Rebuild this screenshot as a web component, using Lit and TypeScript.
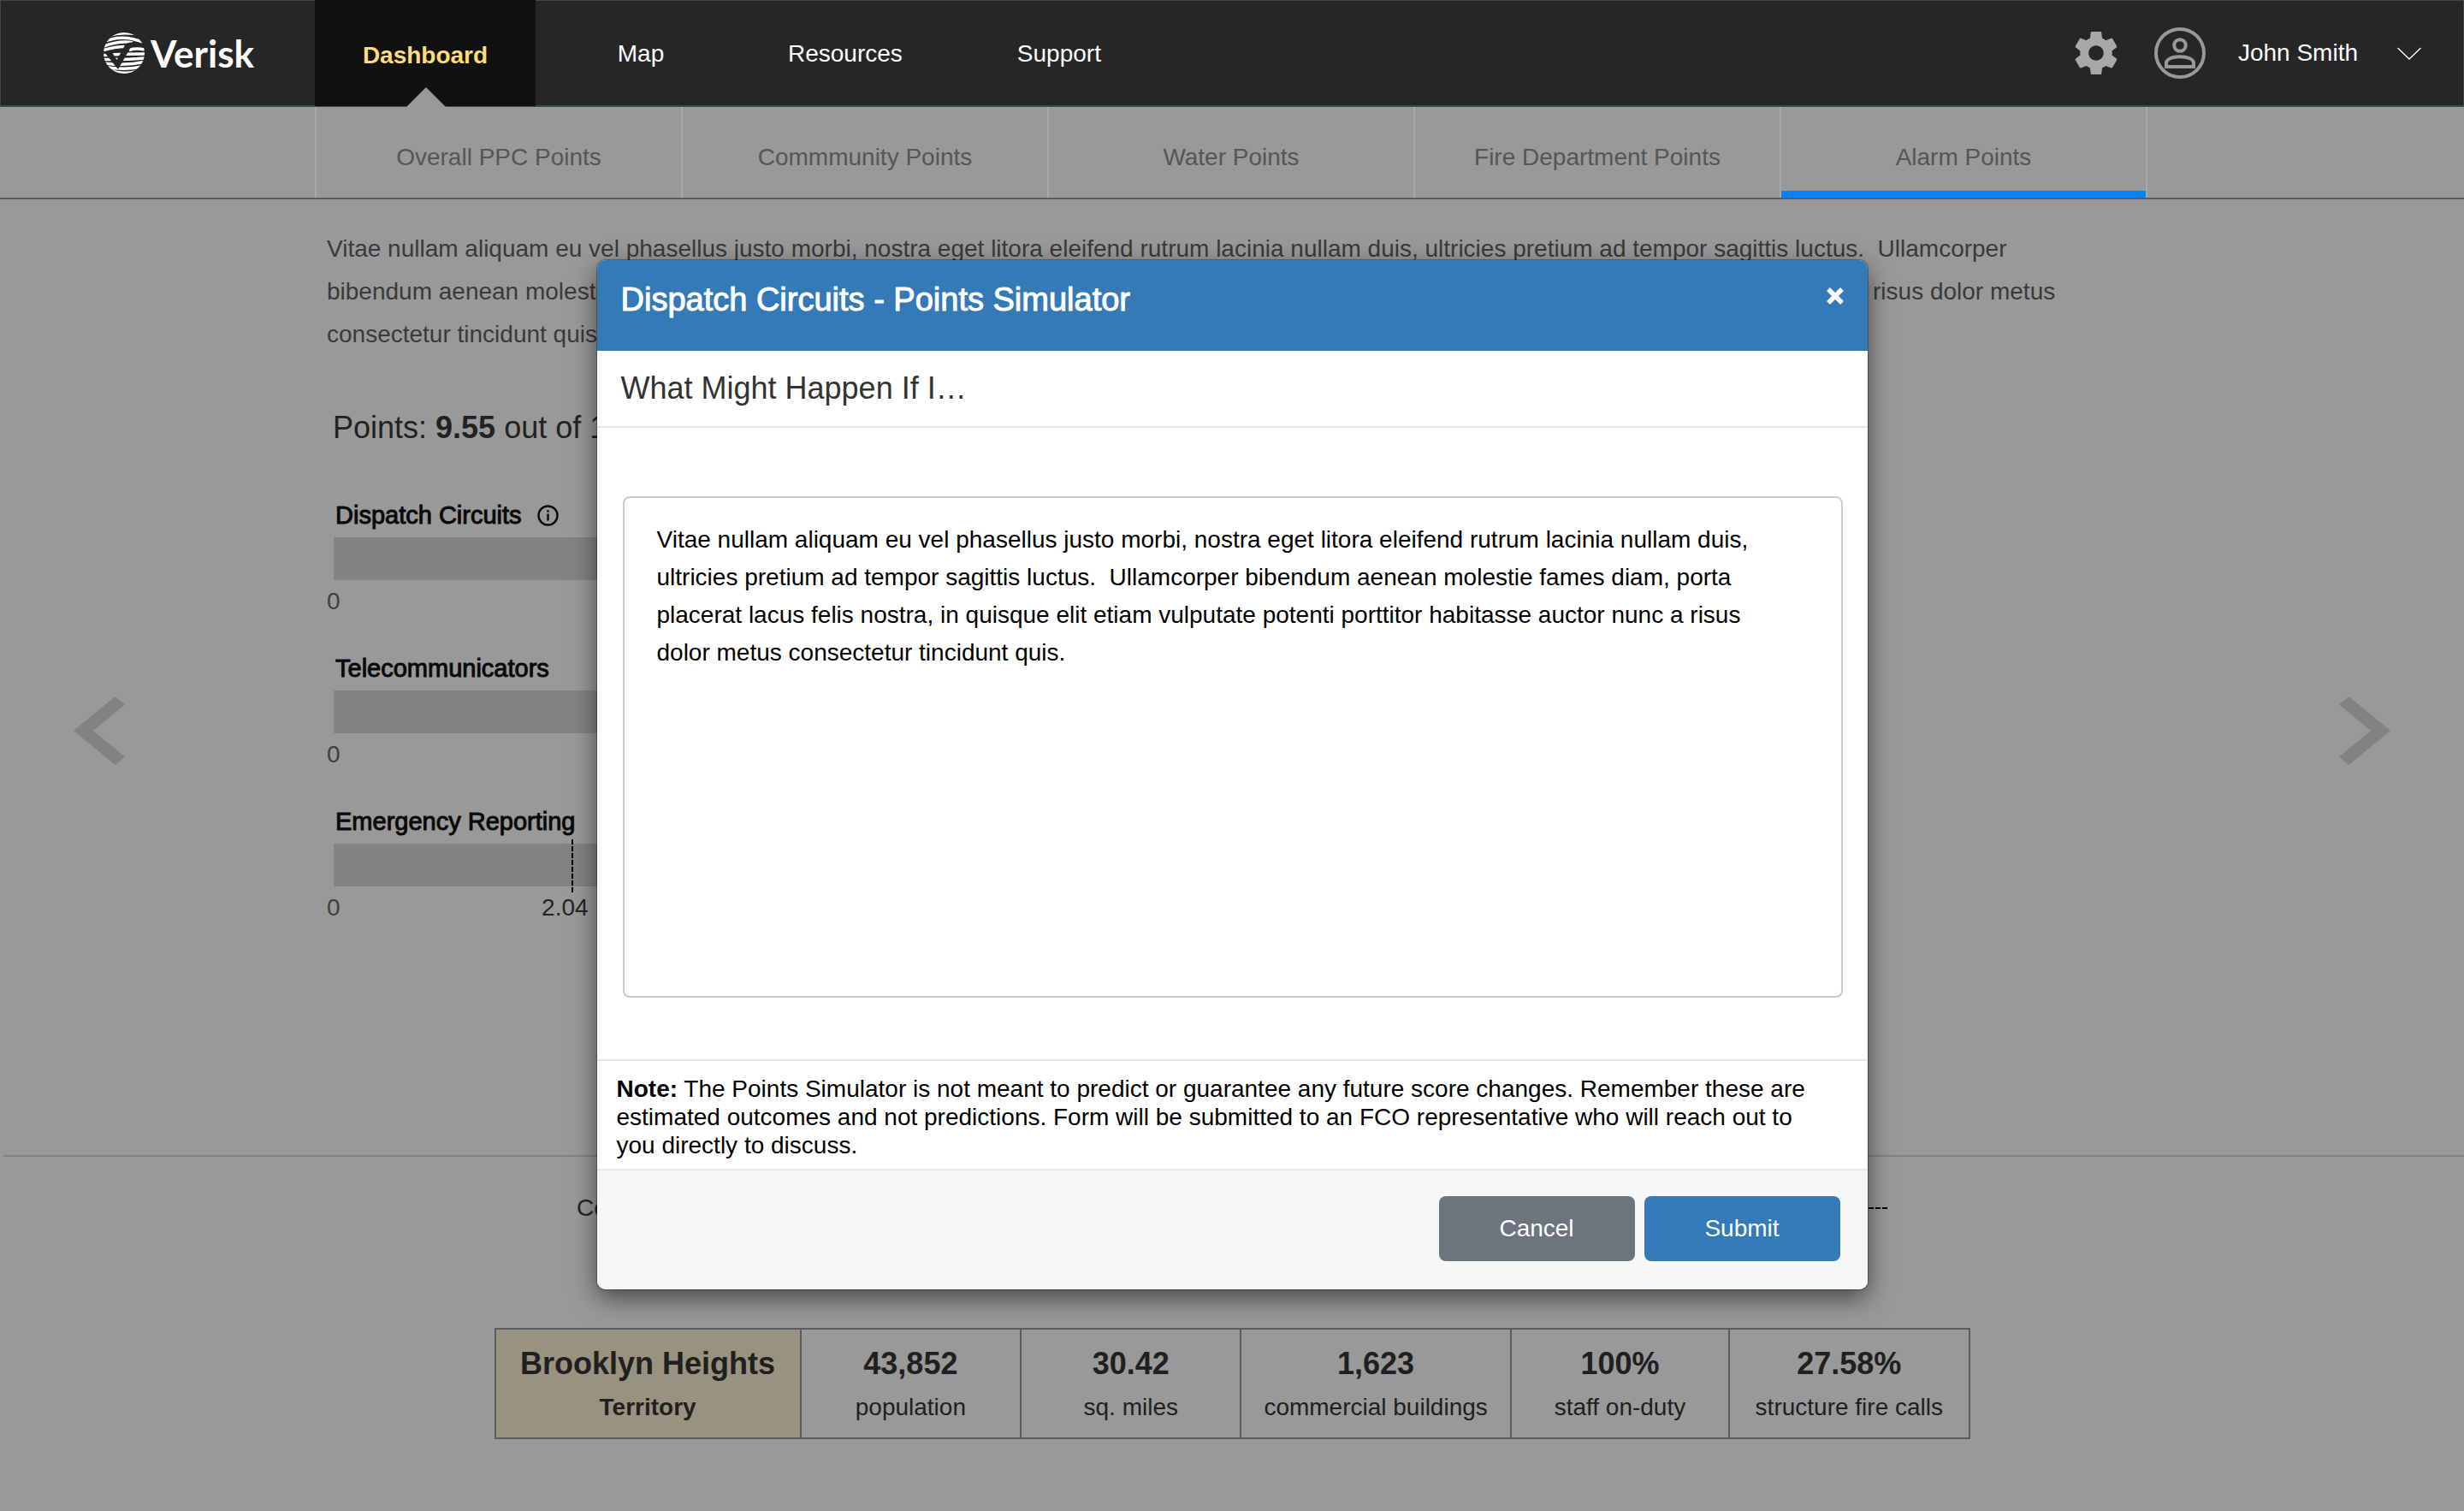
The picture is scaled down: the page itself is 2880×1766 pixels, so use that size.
import { LitElement, html, css, nothing } from "lit";
import { customElement } from "lit/decorators.js";
import { classMap } from "lit/directives/class-map.js";

interface Scale {
  name: string;
  info?: boolean;
  value?: number;
  max: number;
}

const NAV = ["Map", "Resources", "Support"];

const TABS = [
  "Overall PPC Points",
  "Commmunity Points",
  "Water Points",
  "Fire Department Points",
  "Alarm Points",
];

const SCALES: Scale[] = [
  { name: "Dispatch Circuits", info: true, max: 3 },
  { name: "Telecommunicators", max: 3 },
  { name: "Emergency Reporting", value: 2.04, max: 3 },
];

const STATS = [
  ["43,852", "population"],
  ["30.42", "sq. miles"],
  ["1,623", "commercial buildings"],
  ["100%", "staff on-duty"],
  ["27.58%", "structure fire calls"],
];

const DRAFT = [
  "Vitae nullam aliquam eu vel phasellus justo morbi, nostra eget litora eleifend rutrum lacinia nullam duis,",
  "ultricies pretium ad tempor sagittis luctus.  Ullamcorper bibendum aenean molestie fames diam, porta",
  "placerat lacus felis nostra, in quisque elit etiam vulputate potenti porttitor habitasse auctor nunc a risus",
  "dolor metus consectetur tincidunt quis.",
].join("\n");

@customElement("site-header")
class SiteHeader extends LitElement {
  static styles = css`
    :host { display: block; }
    .bar {
      display: flex;
      align-items: stretch;
      height: 125px;
      box-sizing: border-box;
      border: 1px solid #3c494d;
      border-bottom-width: 2px;
      background: #262626;
      color: #fff;
      font-size: 28px;
      line-height: 36px;
    }
    .brand {
      display: flex;
      align-items: center;
      gap: 7px;
      width: 367px;
      box-sizing: border-box;
      padding-left: 120px;
      color: #fff;
      text-decoration: none;
      font-family: Lato, sans-serif;
      font-size: 44px;
      font-weight: 700;
      line-height: 60px;
    }
    .globe { display: block; flex: none; }
    .nav { display: flex; align-items: stretch; margin: -1px 0 -1px; }
    .link {
      display: flex;
      align-items: center;
      padding: 2px 67px 0;
      color: #fff;
      text-decoration: none;
    }
    .link.short { min-width: 76px; justify-content: center; }
    .current {
      position: relative;
      display: flex;
      align-items: center;
      justify-content: center;
      width: 258px;
      margin-right: 18px;
      padding-top: 5px;
      box-sizing: border-box;
      background: #111;
      color: #ffdd75;
      font-weight: 700;
      text-decoration: none;
    }
    .current::after {
      content: "";
      position: absolute;
      left: calc(50% - 22px);
      bottom: -1px;
      border: solid transparent;
      border-width: 0 23px 23px;
      border-bottom-color: #999;
    }
    .tools { display: flex; align-items: center; margin-left: auto; padding-right: 49px; }
    .icon-button, .account {
      display: flex;
      align-items: center;
      padding: 0;
      border: 0;
      background: none;
      color: inherit;
      font: inherit;
    }
    .icon-button { margin-right: 38px; }
    .account { gap: 38px; }
    .account .chev { margin-left: 8px; }
    svg { display: block; flex: none; }
  `;

  render() {
    return html`
      <header class="bar">
        <a class="brand" href="#">
          <svg class="globe" width="48" height="48" viewBox="0 0 48 48" aria-hidden="true">
            <defs><clipPath id="disc"><circle cx="24" cy="24" r="24" /></clipPath></defs>
            <g clip-path="url(#disc)">
              <g fill="none" stroke="#fff" stroke-width="3.5">
                <path d="M4 4Q24-2 44 3" /><path d="M0 11Q22 1 48 12" />
                <path d="M0 16Q20 9 34 12" /><path d="M0 20.500Q20 15 30 17" />
                <path d="M30 20.500Q38 18 48 20" />
                <path d="M0 26.500Q26 25 48 25" /><path d="M0 31.500Q26 32 48 30" />
                <path d="M0 36Q26 39 48 34.500" /><path d="M0 40Q26 45 48 39" />
                <path d="M4 43.500Q26 51 46 43.500" />
              </g>
              <path d="M1 23L9 21.500L15.500 32L26 13Q35 9 49 14L46 17Q37 15 32 17L17 43Z" fill="#262626" />
            </g>
          </svg>
          Verisk
        </a>
        <nav class="nav" aria-label="Main">
          <a class="current" href="#dashboard" aria-current="page">Dashboard</a>
          ${NAV.map(
            (n, i) => html`<a class=${classMap({ link: true, short: i === 0 })} href="#">${n}</a>`
          )}
        </nav>
        <div class="tools">
          <button class="icon-button" aria-label="Settings">
            <svg width="60" height="60" viewBox="0 0 24 24" fill="#a8a8a8">
              <path d="M19.43 12.98c.04-.32.07-.64.07-.98s-.03-.66-.07-.98l2.11-1.65c.19-.15.24-.42.12-.64l-2-3.46c-.12-.22-.39-.3-.61-.22l-2.49 1c-.52-.4-1.08-.73-1.69-.98l-.38-2.65C14.46 2.18 14.25 2 14 2h-4c-.25 0-.46.18-.49.42l-.38 2.65c-.61.25-1.17.59-1.69.98l-2.49-1c-.23-.09-.49 0-.61.22l-2 3.46c-.13.22-.07.49.12.64l2.11 1.65c-.04.32-.07.65-.07.98s.03.66.07.98l-2.11 1.65c-.19.15-.24.42-.12.64l2 3.46c.12.22.39.3.61.22l2.49-1c.52.4 1.08.73 1.69.98l.38 2.65c.03.24.24.42.49.42h4c.25 0 .46-.18.49-.42l.38-2.65c.61-.25 1.17-.59 1.69-.98l2.49 1c.23.09.49 0 .61-.22l2-3.46c.12-.22.07-.49-.12-.64l-2.11-1.65zM12 15.5c-1.93 0-3.5-1.57-3.5-3.5s1.57-3.5 3.5-3.5 3.5 1.57 3.5 3.5-1.57 3.5-3.5 3.5z" />
            </svg>
          </button>
          <button class="account">
            <svg width="60" height="60" viewBox="0 0 60 60" fill="none" stroke="#999" stroke-width="4">
              <circle cx="30" cy="30" r="28" />
              <circle cx="30" cy="21" r="6.8" />
              <path d="M14 46V42C14 37 21 34.2 30 34.2S46 37 46 42V46Z" />
            </svg>
            <span>John Smith</span>
            <svg class="chev" width="28" height="15" viewBox="0 0 28 15" fill="none" stroke="#fff" stroke-width="1.3">
              <path d="M.5 1L14 14L27.5 1" />
            </svg>
          </button>
        </div>
      </header>
    `;
  }
}

@customElement("points-tabs")
class PointsTabs extends LitElement {
  static styles = css`
    :host { display: block; }
    .tabs {
      display: flex;
      height: 106px;
      padding: 0 370px 0 368px;
      border-bottom: 2px solid #5b5c5c;
      font-size: 28px;
      line-height: 36px;
    }
    .tab {
      flex: 1;
      display: flex;
      align-items: center;
      justify-content: center;
      box-sizing: border-box;
      padding-top: 11px;
      border-left: 2px solid #a9a9a9;
      color: #565656;
      text-decoration: none;
    }
    .tab:last-child { border-right: 2px solid #a9a9a9; }
    .active { box-shadow: inset 0 -8px #0084ff; }
  `;

  render() {
    return html`
      <nav class="tabs" aria-label="Points">
        ${TABS.map(
          (t, i) => html`<a
            class=${classMap({ tab: true, active: i === TABS.length - 1 })}
            href="#"
            >${t}</a
          >`
        )}
      </nav>
    `;
  }
}

@customElement("points-scale")
class PointsScale extends LitElement {
  static properties = { scale: { attribute: false } };
  declare scale: Scale;

  static styles = css`
    :host { display: block; width: 417px; }
    .name {
      display: flex;
      align-items: center;
      gap: 18px;
      margin: 0 0 8px 10px;
      color: #0a0a0a;
      font-size: 29px;
      font-weight: 400;
      line-height: 36px;
      white-space: nowrap;
      -webkit-text-stroke: 1px #0a0a0a;
    }
    .bar { position: relative; height: 50px; margin-left: 8px; background: #828385; }
    .marker {
      position: absolute;
      top: -5px;
      width: 2px;
      height: 62px;
      background: repeating-linear-gradient(#000 0 6px, transparent 6px 8px);
    }
    .value {
      position: absolute;
      top: 57px;
      margin-left: -35px;
      color: #242424;
      font-size: 28px;
      line-height: 36px;
    }
    .zero { margin-top: 7px; color: #3f3f3f; font-size: 28px; line-height: 36px; }
    svg { display: block; }
  `;

  render() {
    const s = this.scale;
    const left = s.value === undefined ? "" : `left: ${(s.value / s.max) * 100}%`;
    return html`
      <h3 class="name">
        ${s.name}
        ${s.info
          ? html`<svg width="25" height="25" viewBox="0 0 25 25" fill="none" stroke="#0a0a0a" stroke-width="2.4" role="img" aria-label="More information">
              <circle cx="12.5" cy="12.5" r="11" />
              <path d="M12.5 10.5V18.5M12.5 6.2V8.6" />
            </svg>`
          : nothing}
      </h3>
      <div class="bar">
        ${s.value === undefined
          ? nothing
          : html`<span class="marker" style=${left}></span><span class="value" style=${left}>${s.value}</span>`}
      </div>
      <div class="zero">0</div>
    `;
  }
}

@customElement("simulator-dialog")
class SimulatorDialog extends LitElement {
  static styles = css`
    :host { display: block; }
    .dialog {
      border-radius: 10px;
      overflow: hidden;
      background: #fff;
      box-shadow: 0 0 0 1px rgba(0, 0, 0, 0.3), 0 10px 30px rgba(0, 0, 0, 0.55);
      color: #000;
      font-size: 28px;
    }
    .head {
      display: flex;
      align-items: flex-start;
      justify-content: space-between;
      padding: 24px 28px 38px;
      background: #337ab7;
      color: #fff;
    }
    .title { margin: 0; font-size: 38px; font-weight: 400; line-height: 44px; -webkit-text-stroke: 1px #fff; }
    .close { margin-top: 8px; padding: 0; border: 0; background: none; }
    .close svg { display: block; }
    .question {
      display: block;
      padding: 22px 28px;
      border-bottom: 2px solid #e5e5e5;
      color: #333;
      font-size: 36px;
      line-height: 44px;
    }
    .body { padding: 80px 29px 72px 30px; }
    .field {
      display: block;
      width: 100%;
      height: 586px;
      box-sizing: border-box;
      padding: 27px 38px;
      border: 2px solid #ccc;
      border-radius: 8px;
      background: #fff;
      color: #000;
      font: inherit;
      line-height: 44px;
      resize: none;
      overflow: hidden;
    }
    .note {
      margin: 0;
      padding: 16px 40px 11px 23px;
      border-top: 2px solid #e5e5e5;
      line-height: 33px;
    }
    .foot {
      display: flex;
      justify-content: flex-end;
      gap: 11px;
      padding: 30px 32px 33px;
      border-top: 2px solid #e8e8e8;
      background: #f7f7f7;
    }
    .button {
      width: 229px;
      height: 76px;
      padding: 0;
      border: 0;
      border-radius: 8px;
      background: #6c757d;
      color: #fff;
      font: inherit;
    }
    .primary { background: #337ab7; }
  `;

  render() {
    return html`
      <section class="dialog" role="dialog" aria-labelledby="title">
        <header class="head">
          <h2 class="title" id="title">Dispatch Circuits - Points Simulator</h2>
          <button class="close" aria-label="Close">
            <svg width="20" height="20" viewBox="0 0 20 20" fill="none" stroke="#fff" stroke-width="5.5">
              <path d="M2 2L18 18M18 2L2 18" />
            </svg>
          </button>
        </header>
        <label class="question" for="plan">What Might Happen If I…</label>
        <div class="body"><textarea class="field" id="plan" .value=${DRAFT}></textarea></div>
        <p class="note">
          <b>Note:</b> The Points Simulator is not meant to predict or guarantee any future score
          changes. Remember these are<br />estimated outcomes and not predictions. Form will be
          submitted to an FCO representative who will reach out to<br />you directly to discuss.
        </p>
        <footer class="foot">
          <button class="button">Cancel</button>
          <button class="button primary">Submit</button>
        </footer>
      </section>
    `;
  }
}

@customElement("app-root")
class AppRoot extends LitElement {
  static styles = css`
    :host {
      display: block;
      position: relative;
      min-height: 100vh;
      overflow: hidden;
      background: #999;
      font-family: "Liberation Sans", Arial, sans-serif;
    }
    .stage {
      display: grid;
      grid-template-columns: 382px minmax(0, 1fr) 382px;
      padding: 33px 0 271px;
    }
    .pager {
      align-self: center;
      margin: 363px 86px 0;
      padding: 0;
      border: 0;
      background: none;
    }
    .prev { justify-self: start; }
    .next { justify-self: end; }
    .pager svg { display: block; }
    .intro {
      margin: 0;
      color: #3a3a3a;
      font-size: 28px;
      line-height: 50px;
      white-space: nowrap;
    }
    .total {
      margin: 62px 0 62px 7px;
      color: #222;
      font-size: 36px;
      font-weight: 400;
      line-height: 44px;
    }
    .scales { display: grid; gap: 42px; }
    .rule { height: 2px; margin: 0 0 0 4px; border: 0; background: #828282; }
    .compare {
      display: flex;
      align-items: center;
      gap: 16px;
      max-width: 1532px;
      margin: 42px auto 122px;
      color: #242424;
      font-size: 28px;
      line-height: 36px;
    }
    .dashes { flex: 1; height: 2px; background: repeating-linear-gradient(to left, #000 0 6px, transparent 6px 8px); }
    .stats {
      display: grid;
      grid-template-columns: 356fr 258fr 258fr 316fr 256fr 281fr;
      max-width: 1721px;
      margin: 0 auto;
      border: 2px solid #5b5c5c;
      color: #202020;
      text-align: center;
    }
    .stat { display: flex; flex-direction: column; gap: 11px; padding: 18px 0 17px; }
    .stat + .stat { border-left: 2px solid #5b5c5c; }
    .figure { font-size: 36px; font-weight: 700; line-height: 44px; }
    .caption { font-size: 28px; line-height: 36px; }
    .place { background: #99927f; }
    .place .caption { font-weight: 700; }
    .overlay {
      position: absolute;
      inset: 304px 0 auto;
      display: flex;
      justify-content: center;
    }
    .modal { width: 1485px; max-width: 100%; }
  `;

  render() {
    return html`
      <site-header></site-header>
      <points-tabs></points-tabs>
      <main>
        <section class="stage">
          <button class="pager prev" aria-label="Previous">
            <svg width="60" height="80" viewBox="0 0 60 80" fill="#828282">
              <path d="M0 40L48.500 0L60 9.500L23 40L60 70.500L48.500 80Z" />
            </svg>
          </button>
          <div>
            <p class="intro">
              Vitae nullam aliquam eu vel phasellus justo morbi, nostra eget litora eleifend rutrum
              lacinia nullam duis, ultricies pretium ad tempor sagittis luctus.&nbsp; Ullamcorper<br />bibendum
              aenean molestie fames diam, porta placerat lacus felis nostra, in quisque elit etiam
              vulputate potenti porttitor habitasse auctor nunc a&nbsp;&nbsp;&nbsp; risus dolor metus<br />consectetur
              tincidunt quis.
            </p>
            <h2 class="total">Points: <b>9.55</b> out of 10</h2>
            <div class="scales">
              ${SCALES.map((s) => html`<points-scale .scale=${s}></points-scale>`)}
            </div>
          </div>
          <button class="pager next" aria-label="Next">
            <svg width="60" height="80" viewBox="0 0 60 80" fill="#828282">
              <path d="M60 40L11.500 0L0 9.500L37 40L0 70.500L11.500 80Z" />
            </svg>
          </button>
        </section>
        <hr class="rule" />
        <div class="compare"><span>Community</span><span class="dashes"></span></div>
        <div class="stats">
          <div class="stat place">
            <span class="figure">Brooklyn Heights</span><span class="caption">Territory</span>
          </div>
          ${STATS.map(
            ([figure, caption]) => html`<div class="stat">
              <span class="figure">${figure}</span><span class="caption">${caption}</span>
            </div>`
          )}
        </div>
      </main>
      <div class="overlay"><simulator-dialog class="modal"></simulator-dialog></div>
    `;
  }
}
